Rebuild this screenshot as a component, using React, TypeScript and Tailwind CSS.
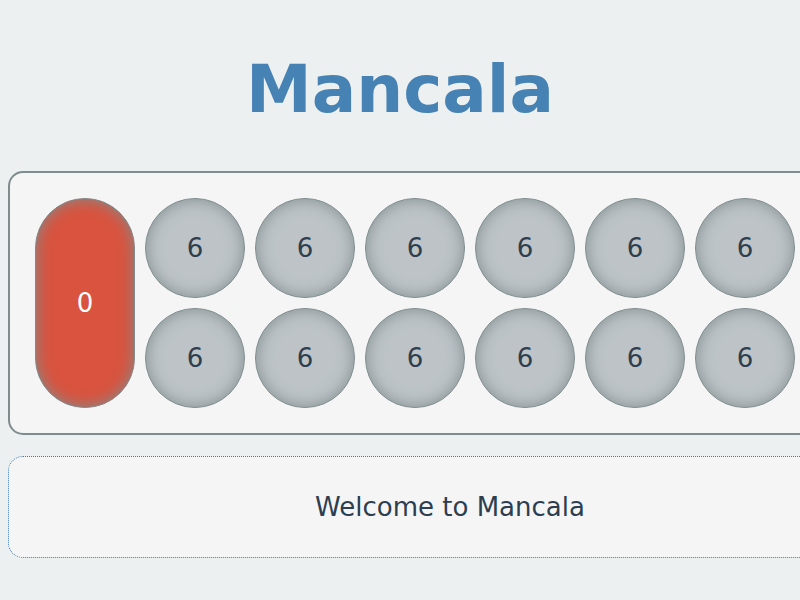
const PITS_PER_SIDE = 6;
const STONES = 6;

function Pit({ count }: { count: number }) {
  return (
    <div className="w-[100px] h-[100px] shrink-0 rounded-full border border-[#7f8c8d] bg-[#bdc3c7] shadow-[inset_0_0_15px_#7f8c8d] flex items-center justify-center text-[26px] text-[#2c3e50]">
      {count}
    </div>
  );
}

function Store({ count }: { count: number }) {
  return (
    <div className="w-[100px] h-[210px] shrink-0 rounded-[50px] border border-[#7f8c8d] bg-[#d9533e] shadow-[inset_0_0_15px_#7f8c8d] flex items-center justify-center text-[26px] text-white">
      {count}
    </div>
  );
}

export default function App() {
  const top = Array.from({ length: PITS_PER_SIDE }, () => STONES);
  const bottom = Array.from({ length: PITS_PER_SIDE }, () => STONES);

  return (
    <div className="min-h-screen bg-[#ecf0f1] px-2 pt-[53px] overflow-hidden font-['DejaVu_Sans',Verdana,sans-serif]">
      <h1 className="text-center text-[66px] font-bold leading-[74px] text-[#4682b4] mb-[44px]">Mancala</h1>

      <div className="w-[884px]">
        <div className="w-max bg-[#f5f5f5] border-2 border-[#7f8c8d] rounded-[15px] p-[25px] flex gap-[10px]">
          <Store count={0} />
          <div className="grid grid-cols-6 gap-[10px]">
            {top.map((n, i) => <Pit key={'t' + i} count={n} />)}
            {bottom.map((n, i) => <Pit key={'b' + i} count={n} />)}
          </div>
          <Store count={0} />
        </div>

        <div className="mt-[21px] h-[102px] bg-[#f5f5f5] border border-dotted border-[#3f78aa] rounded-[15px] flex items-center justify-center text-[26px] text-[#2c3e50]">
          Welcome to Mancala
        </div>
      </div>
    </div>
  );
}
